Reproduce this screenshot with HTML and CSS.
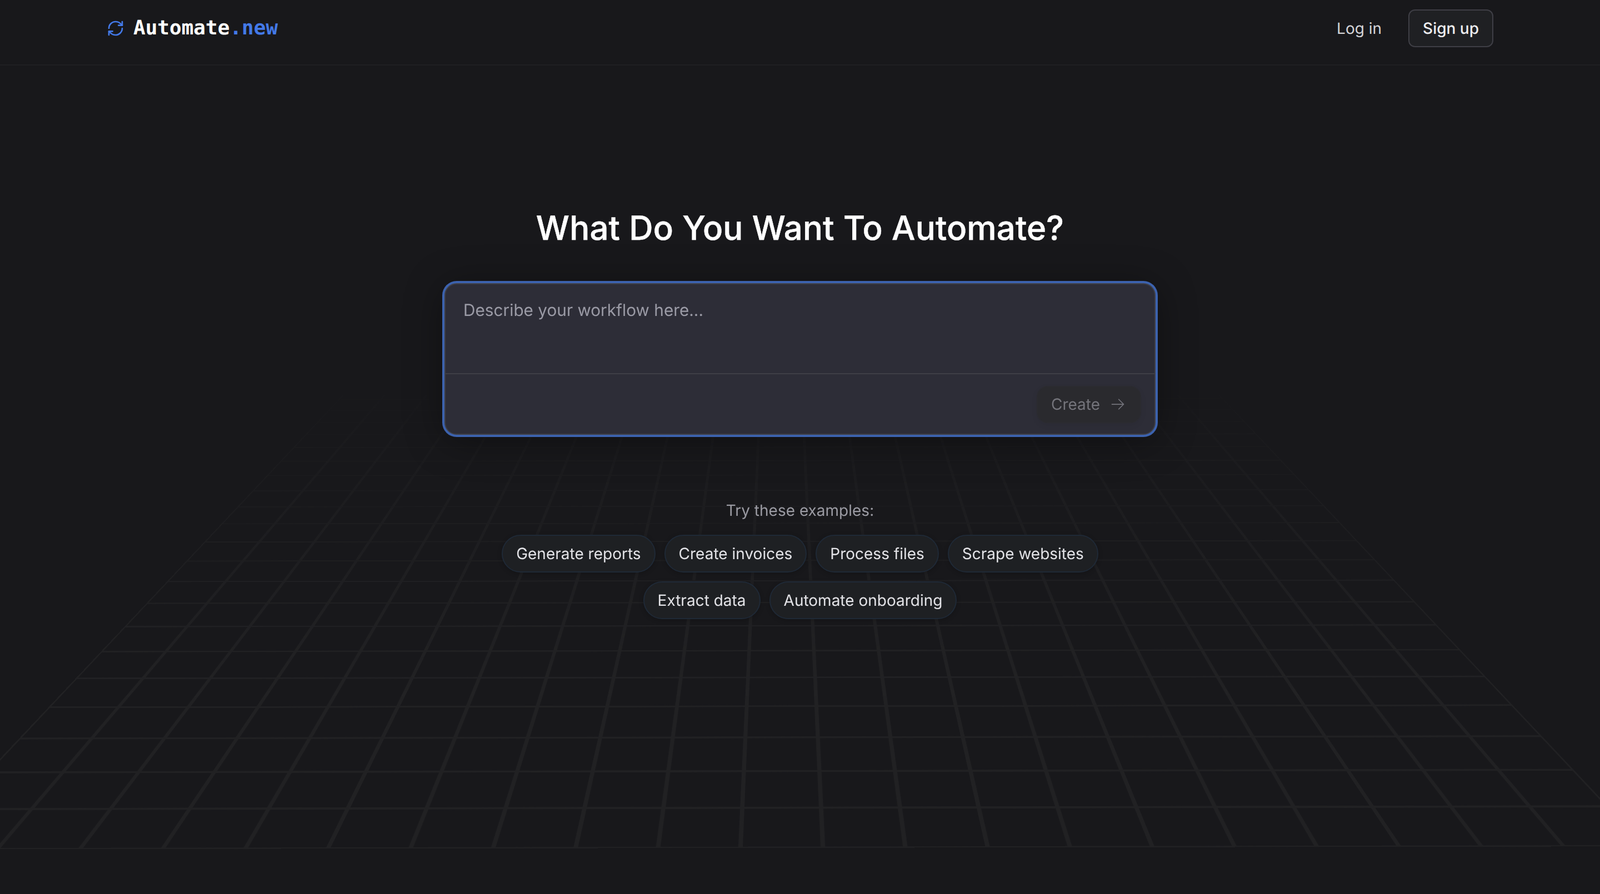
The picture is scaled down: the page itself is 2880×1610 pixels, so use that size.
FILE: index.html
```html
<!DOCTYPE html>
<html lang="en">
<head>
<meta charset="utf-8">
<title>Automate.new</title>
<link rel="stylesheet" href="styles.css">
</head>
<body>
<div class="backdrop"><div class="grid-floor"></div></div>
<header class="topbar">
  <a class="brand">
    <svg class="brand-icon" viewBox="0 0 24 24" fill="none" stroke="currentColor" stroke-width="2" stroke-linecap="round" stroke-linejoin="round"><path d="M3 12a9 9 0 0 1 9-9 9.75 9.75 0 0 1 6.74 2.74L21 8"/><path d="M21 3v5h-5"/><path d="M21 12a9 9 0 0 1-9 9 9.75 9.75 0 0 1-6.74-2.74L3 16"/><path d="M8 16H3v5"/></svg>
    <span class="brand-name">Automate<span class="brand-tld">.new</span></span>
  </a>
  <nav class="auth">
    <a class="login">Log in</a>
    <a class="signup">Sign up</a>
  </nav>
</header>
<main class="hero">
  <h1 class="headline">What Do You Want To Automate?</h1>
  <section class="composer">
    <div class="prompt">Describe your workflow here...</div>
    <div class="composer-foot">
      <button class="create">Create
        <svg class="create-icon" viewBox="0 0 24 24" fill="none" stroke="currentColor" stroke-width="1.5" stroke-linecap="round" stroke-linejoin="round"><path d="M13.5 4.5 21 12m0 0-7.5 7.5M21 12H3"/></svg>
      </button>
    </div>
  </section>
  <p class="examples-label">Try these examples:</p>
  <div class="examples">
    <a class="chip">Generate reports</a>
    <a class="chip">Create invoices</a>
    <a class="chip">Process files</a>
    <a class="chip">Scrape websites</a>
    <a class="chip">Extract data</a>
    <a class="chip">Automate onboarding</a>
  </div>
</main>
</body>
</html>
```
FILE: styles.css
```css
* { box-sizing: border-box; }
html, body { margin: 0; height: 100%; }
body {
  position: relative;
  min-height: 1610px;
  overflow: hidden;
  background: #18181b;
  color: #fff;
  font-family: Inter, "Liberation Sans", sans-serif;
  text-rendering: geometricPrecision;
}
.backdrop {
  position: absolute;
  inset: 0;
  overflow: hidden;
}
.grid-floor {
  position: absolute;
  left: -151.4px;
  top: -2034.6px;
  width: 3116.4px;
  height: 3561.6px;
  transform-origin: 1632.4px 3561.6px;
  transform: matrix3d(0.99991, -0.00175, 0, 0.00000106, 0.02336, 0.5077, 0, -0.0003073, 0, 0, 1, 0, 0, 0, 0, 1);
  background-image:
    linear-gradient(to right, #212123 4px, transparent 4px, transparent 144.4px, #212123 144.4px),
    linear-gradient(to bottom, #212123 4px, transparent 4px, transparent 144.4px, #212123 144.4px);
  background-size: 148.4px 148.4px;
  background-position: left bottom;
  -webkit-mask-image: linear-gradient(to top, #000 18%, transparent 90%);
  mask-image: linear-gradient(to top, #000 18%, transparent 90%);
}
.topbar {
  position: relative;
  display: flex;
  align-items: center;
  justify-content: space-between;
  height: 118px;
  padding: 0 192px 14px;
  border-bottom: 2px solid #1f1f22;
}
.brand {
  display: flex;
  align-items: center;
  gap: 16px;
}
.brand-icon {
  width: 32px;
  height: 32px;
  color: #4379e8;
}
.brand-name {
  padding-bottom: 1px;
  font-family: "DejaVu Sans Mono", monospace;
  font-size: 36px;
  font-weight: 700;
  color: #fff;
}
.brand-tld { color: #4379e8; }
.auth {
  display: flex;
  align-items: center;
  gap: 48px;
}
.login {
  font-size: 28px;
  color: #d4d4d8;
}
.signup {
  padding: 14px 24px;
  font-size: 28px;
  font-weight: 500;
  line-height: 36px;
  color: #eeeef0;
  background: #1f2023;
  border: 2px solid #3f3f46;
  border-radius: 12px;
}
.hero {
  position: relative;
  display: flex;
  flex-direction: column;
  align-items: center;
  padding-top: 255px;
}
.headline {
  margin: 0 0 61px;
  font-size: 60px;
  font-weight: 500;
  line-height: 76px;
  letter-spacing: 0.14px;
  -webkit-text-stroke: 0.5px #fff;
  color: #fff;
}
.composer {
  width: 1280px;
  height: 273px;
  display: flex;
  flex-direction: column;
  background: #2d2d37;
  border: 2px solid #3f3f46;
  border-radius: 22px;
  box-shadow: 0 0 0 4px #3c62ae, 0 8px 70px rgba(0, 0, 0, 0.4);
}
.prompt {
  height: 162px;
  padding: 27px 32px;
  font-size: 29.75px;
  line-height: 40px;
  color: #9a9aa5;
  border-bottom: 2px solid #3f3f46;
}
.composer-foot {
  flex: 1;
  display: flex;
  justify-content: flex-end;
  align-items: center;
  padding: 1px 24px 0;
}
.create {
  display: flex;
  align-items: center;
  gap: 18px;
  height: 67px;
  padding: 0 26px 0 24px;
  font-family: inherit;
  font-size: 28px;
  text-rendering: inherit;
  color: #74747b;
  background: #2a2a2e;
  border: 2px solid #2b2b30;
  border-radius: 20px;
  box-shadow: 0 4px 12px rgba(0, 0, 0, 0.06);
}
.create-icon { width: 28px; height: 28px; }
.examples-label {
  margin: 116px 0 24px;
  font-size: 28px;
  line-height: 40px;
  color: #9a9aa2;
}
.examples {
  display: flex;
  flex-wrap: wrap;
  justify-content: center;
  gap: 16px;
  width: 1280px;
}
.chip {
  height: 68px;
  padding: 0 24px;
  display: flex;
  align-items: center;
  font-size: 28px;
  color: #e2e2e6;
  background: #1e2023;
  border: 2px solid #1f2936;
  border-radius: 34px;
  box-shadow: 0 2px 8px rgba(0, 0, 0, 0.2);
}
```
